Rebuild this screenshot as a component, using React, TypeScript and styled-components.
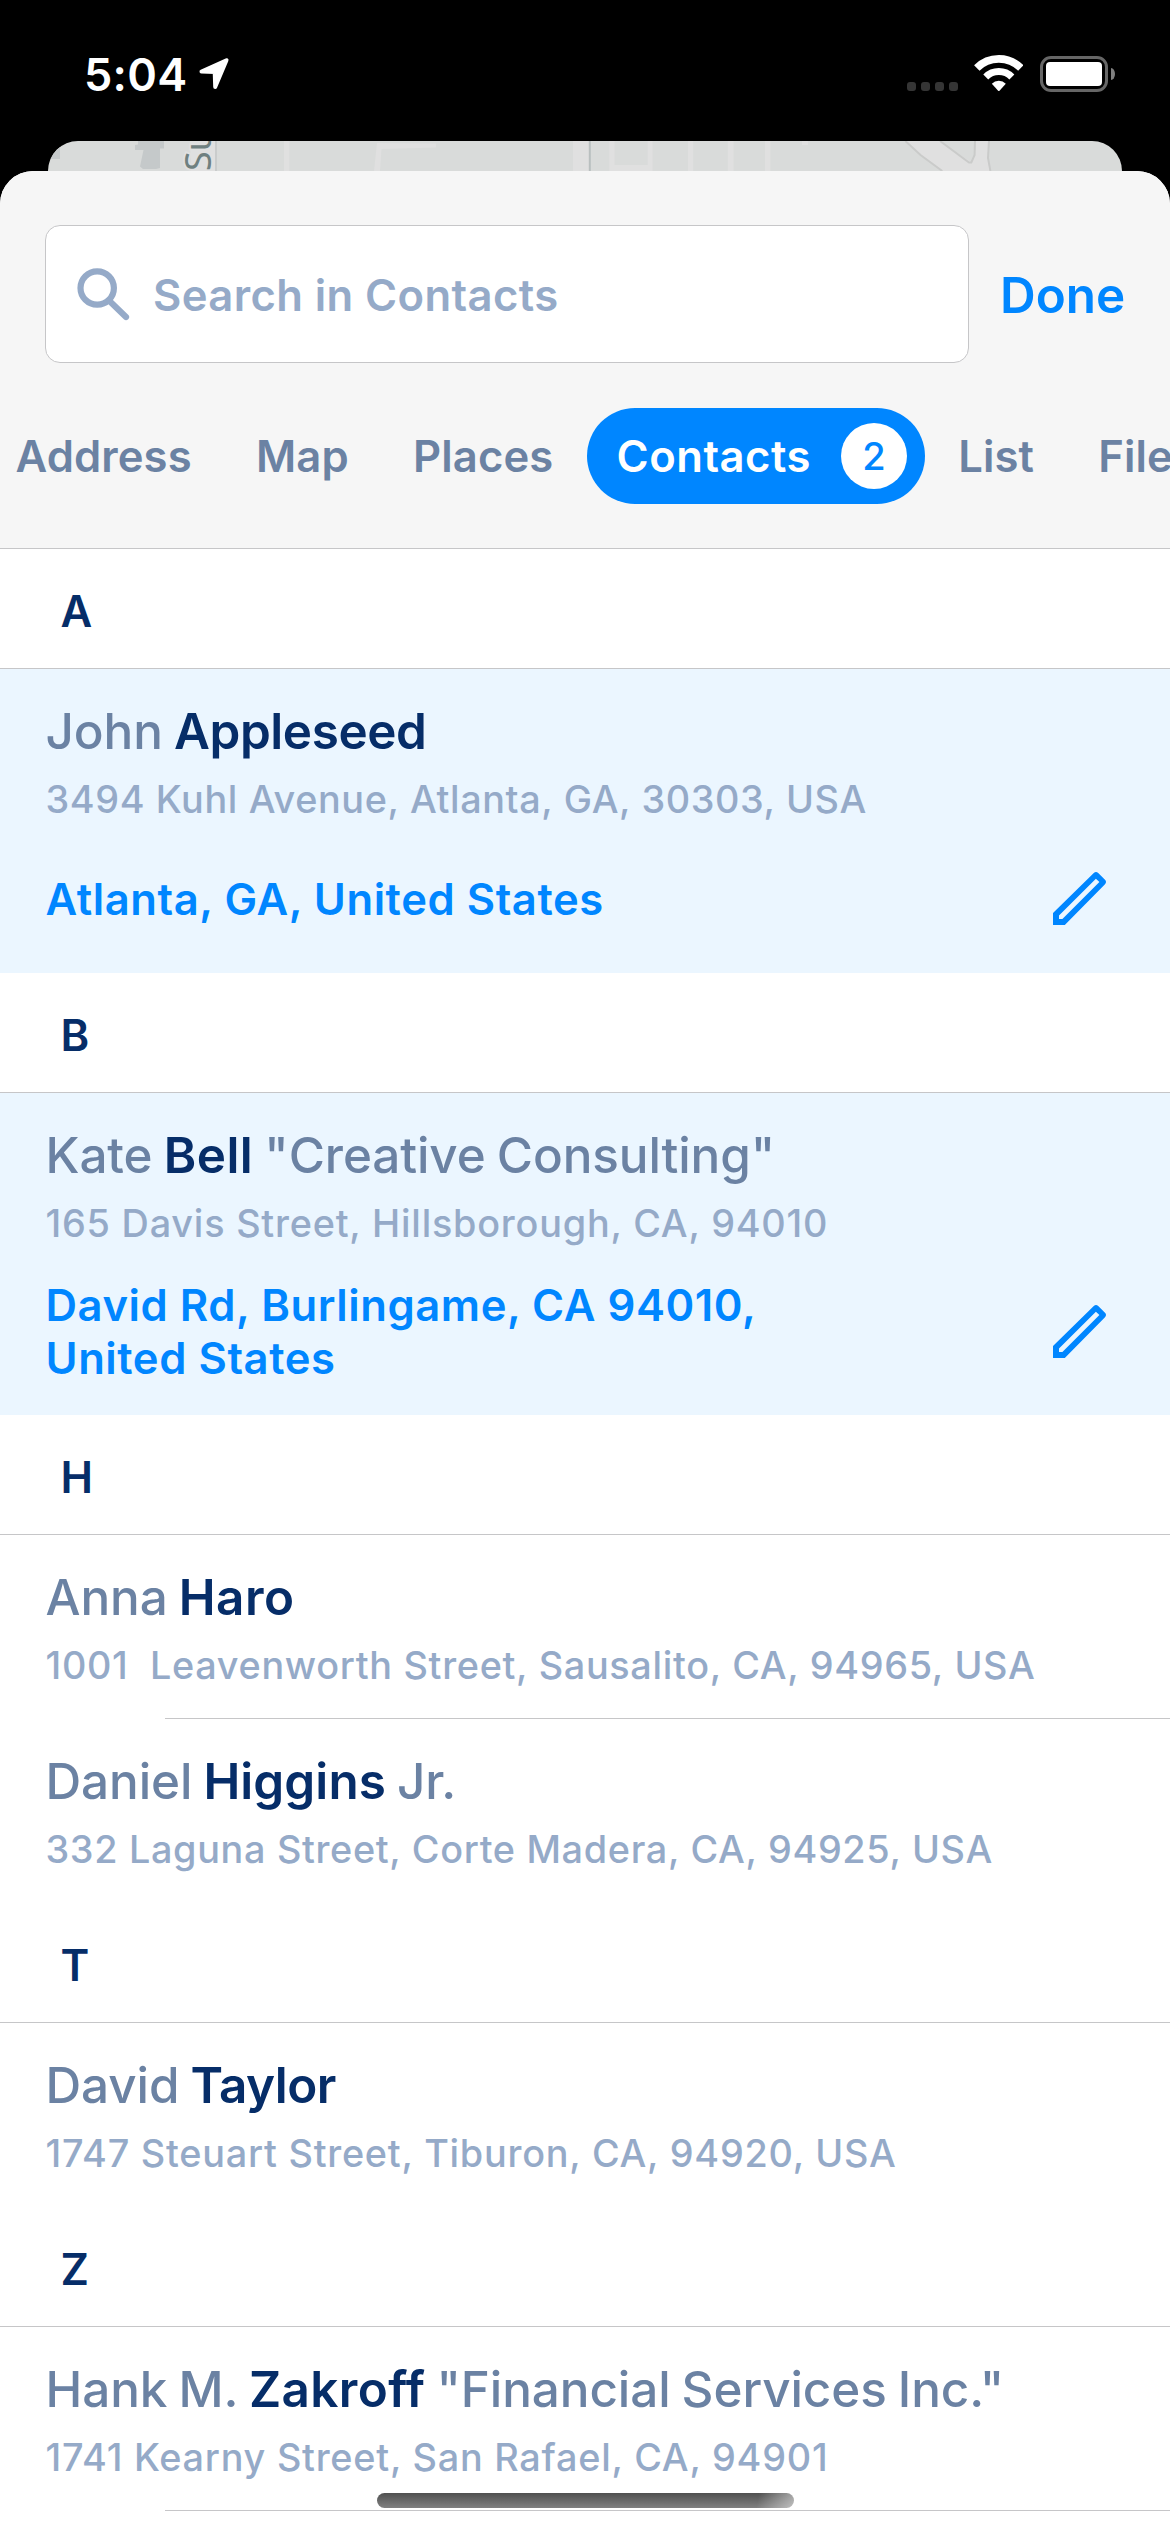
import React from "react";
import styled, { createGlobalStyle } from "styled-components";

const color = {
  blue: "#0086ff",
  navy: "#062d68",
  slate: "#6b82a3",
  mist: "#95aac8",
  line: "#c6c6c8",
  chrome: "#f6f6f6",
  highlight: "#ebf6ff",
};

const GlobalStyle = createGlobalStyle`
  *, *::before, *::after { box-sizing: border-box; }
  body { margin: 0; background: #000; }
  button { border: 0; padding: 0; background: none; font: inherit; color: inherit; }
`;

const Screen = styled.div`
  position: relative;
  display: flex;
  flex-direction: column;
  width: 1170px;
  height: 2532px;
  overflow: hidden;
  background: #000;
  font-family: Inter, "Liberation Sans", sans-serif;
`;

/* ---------- status bar ---------- */

const StatusBar = styled.header`
  display: flex;
  align-items: flex-start;
  justify-content: space-between;
  flex: none;
  height: 141px;
  padding: 55px 55px 0 84px;
`;

const StatusLeft = styled.div`
  display: flex;
  align-items: flex-start;
  gap: 10px;
`;

const Time = styled.span`
  color: #fff;
  font-size: 45px;
  font-weight: 600;
  line-height: 40px;
  letter-spacing: 0.3px;
`;

const LocationIcon = styled.svg`
  display: block;
  width: 32px;
  height: 33px;
  margin-top: 2px;
`;

const StatusRight = styled.div`
  display: flex;
  align-items: flex-start;
`;

const SignalDots = styled.div`
  display: flex;
  gap: 5px;
  margin: 27px 16px 0 0;
`;

const Dot = styled.i`
  width: 9px;
  height: 9px;
  border-radius: 3px;
  background: #353535;
`;

const WifiIcon = styled.svg`
  display: block;
  width: 49.3px;
  height: 36px;
  margin-right: 16.7px;
`;

const Battery = styled.div`
  width: 68px;
  height: 36px;
  margin: 1px 3px 0 0;
  padding: 3px;
  border: 3px solid #666;
  border-radius: 11px;
`;

const BatteryLevel = styled.div`
  height: 100%;
  border-radius: 4px;
  background: #fff;
`;

const BatteryCap = styled.div`
  width: 4px;
  height: 12px;
  margin-top: 13px;
  border-radius: 0 4px 4px 0 / 0 6px 6px 0;
  background: #7f7f7f;
`;

/* ---------- map card behind the sheet ---------- */

const MapCard = styled.div`
  flex: none;
  width: 1074px;
  height: 30px;
  margin: 0 48px;
  overflow: hidden;
  border-radius: 30px 30px 0 0;
  background: #d9dbda;
`;

const MapDrawing = styled.svg`
  display: block;
  width: 1074px;
  height: 30px;
`;

const MapLabel = styled.text`
  font-family: "Noto Sans", sans-serif;
  font-size: 36px;
  fill: #6f8080;
  stroke: #e0e0e0;
  stroke-width: 4px;
  paint-order: stroke;
`;

/* ---------- sheet ---------- */

const Sheet = styled.main`
  display: flex;
  flex-direction: column;
  flex: 1;
  overflow: hidden;
  border-radius: 33px 33px 0 0;
  background: #fff;
`;

const SheetHeader = styled.div`
  flex: none;
  height: 378px;
  padding-top: 54px;
  border-bottom: 1px solid ${color.line};
  background: ${color.chrome};
`;

const SearchRow = styled.div`
  display: flex;
  align-items: center;
  gap: 31px;
  padding-left: 45px;
`;

const SearchField = styled.div`
  display: flex;
  align-items: center;
  gap: 23px;
  width: 924px;
  height: 138px;
  padding-left: 31px;
  border: 1px solid ${color.line};
  border-radius: 15px;
  background: #fff;
`;

const SearchIcon = styled.svg`
  display: block;
  width: 53px;
  height: 53px;
`;

const Placeholder = styled.span`
  padding-top: 4px;
  color: ${color.mist};
  font-size: 43.6px;
  font-weight: 600;
  line-height: 54px;
  letter-spacing: 0.4px;
`;

const DoneButton = styled.button`
  padding-top: 2px;
  color: ${color.blue};
  font-size: 49.4px;
  font-weight: 600;
  line-height: 60px;
  letter-spacing: 0;
`;

const Tabs = styled.nav`
  display: flex;
  gap: 2.3px;
  width: max-content;
  margin: 45px 0 0 -15.5px;
`;

const Tab = styled.button<{ $active?: boolean }>`
  display: flex;
  align-items: center;
  gap: 30px;
  height: 96px;
  padding: ${(p) => (p.$active ? "0 18px 0 30px" : "0 31px")};
  border-radius: 48px;
  background: ${(p) => (p.$active ? color.blue : "transparent")};
  color: ${(p) => (p.$active ? "#fff" : color.slate)};
  font-size: 43.6px;
  font-weight: 600;
  line-height: 54px;
  letter-spacing: ${(p) => (p.$active ? "0.5px" : "0.1px")};
`;

const TabLabel = styled.span`
  padding-top: 2px;
`;

const Badge = styled.span`
  display: flex;
  align-items: center;
  justify-content: center;
  width: 66px;
  height: 66px;
  border-radius: 50%;
  background: #fff;
  color: ${color.blue};
  font-size: 38px;
  font-weight: 500;
  letter-spacing: 0;
`;

/* ---------- contact list ---------- */

const List = styled.div`
  flex: 1;
`;

const SectionHeader = styled.h2`
  display: flex;
  align-items: center;
  height: 120px;
  margin: 0;
  padding: 7px 0 0 60.5px;
  border-bottom: 1px solid ${color.line};
  color: ${color.navy};
  font-size: 43.6px;
  font-weight: 600;
  line-height: 54px;
`;

const Row = styled.article<{ $selected: boolean }>`
  padding-top: 32px;
  min-height: 184px;
  background: ${(p) => (p.$selected ? color.highlight : "#fff")};
`;

const Name = styled.div`
  padding-left: 45.5px;
  color: ${color.slate};
  font-size: 49.4px;
  font-weight: 500;
  line-height: 60px;
  letter-spacing: -0.08px;
  word-spacing: -2px;
  white-space: pre;
`;

const Surname = styled.b<{ $tracking: number }>`
  color: ${color.navy};
  font-weight: 600;
  letter-spacing: ${(p) => p.$tracking}px;
`;

const Address = styled.div<{ $tracking: number }>`
  padding: 14px 0 0 45.5px;
  color: ${color.mist};
  font-size: 37.8px;
  font-weight: 500;
  line-height: 48px;
  letter-spacing: ${(p) => p.$tracking}px;
  white-space: pre;
`;

const MatchRow = styled.div`
  display: flex;
  align-items: center;
  justify-content: space-between;
  min-height: 150px;
  padding: 31px 64px 30.4px 45.5px;
`;

const MatchText = styled.div`
  width: 760px;
  padding-top: 1px;
  margin-bottom: -1px;
  color: ${color.blue};
  font-size: 43.6px;
  font-weight: 600;
  line-height: 53.3px;
  letter-spacing: 0.56px;
`;

const PencilIcon = styled.svg`
  display: block;
  width: 53px;
  height: 53px;
  overflow: visible;
`;

const Divider = styled.div`
  height: 1px;
  margin: 29px 0 0 165px;
  background: ${color.line};
`;

const HomeIndicator = styled.div`
  position: absolute;
  left: 377px;
  top: 2493px;
  width: 417px;
  height: 15px;
  border-radius: 8px;
  background: linear-gradient(100deg, transparent 91%, rgba(255, 255, 255, 0.5) 100%),
    linear-gradient(#505050, #808080);
`;

interface Contact {
  first: string;
  last: string;
  lastTracking: number;
  suffix?: string;
  address: string;
  tracking: number;
  match?: string;
  divider?: boolean;
}

const sections: { letter: string; contacts: Contact[] }[] = [
  {
    letter: "A",
    contacts: [
      {
        first: "John",
        last: "Appleseed",
        lastTracking: -0.4,
        address: "3494 Kuhl Avenue, Atlanta, GA, 30303, USA",
        tracking: 0.62,
        match: "Atlanta, GA, United States",
      },
    ],
  },
  {
    letter: "B",
    contacts: [
      {
        first: "Kate",
        last: "Bell",
        lastTracking: 0.5,
        suffix: '"Creative Consulting"',
        address: "165 Davis Street, Hillsborough, CA, 94010",
        tracking: 0.79,
        match: "David Rd, Burlingame, CA 94010, United States",
      },
    ],
  },
  {
    letter: "H",
    contacts: [
      {
        first: "Anna",
        last: "Haro",
        lastTracking: 0.5,
        address: "1001  Leavenworth Street, Sausalito, CA, 94965, USA",
        tracking: 0.69,
        divider: true,
      },
      {
        first: "Daniel",
        last: "Higgins",
        lastTracking: 0.1,
        suffix: "Jr.",
        address: "332 Laguna Street, Corte Madera, CA, 94925, USA",
        tracking: 0.67,
      },
    ],
  },
  {
    letter: "T",
    contacts: [
      {
        first: "David",
        last: "Taylor",
        lastTracking: -0.5,
        address: "1747 Steuart Street, Tiburon, CA, 94920, USA",
        tracking: 0.76,
      },
    ],
  },
  {
    letter: "Z",
    contacts: [
      {
        first: "Hank M.",
        last: "Zakroff",
        lastTracking: 0.4,
        suffix: '"Financial Services Inc."',
        address: "1741 Kearny Street, San Rafael, CA, 94901",
        tracking: 0.76,
        divider: true,
      },
    ],
  },
];

const tabs: { label: string; count?: number }[] = [
  { label: "Address" },
  { label: "Map" },
  { label: "Places" },
  { label: "Contacts", count: 2 },
  { label: "List" },
  { label: "Files" },
];

function MapStrip() {
  return (
    <MapCard>
      <MapDrawing viewBox="0 0 1074 30">
        <g fill="#c5c9ca">
          <path d="M0 0H12V18H0Z" />
          <path d="M90 0H116V7.5H112V27L108 28H95L92 25.5L95.5 9H87V4L90 3.5Z" />
        </g>
        <g fill="#e0e0e0">
          <path d="M142 0H168V30H143Z" />
          <path d="M236 0H241.3V30H236Z" />
          <path d="M329 2L388 2.5V6.5L333.5 8L332 30H326Z" />
          <path d="M525 0H541V30H525Z" />
          <path d="M561.3 0H566.6V24H599.7V0H604.6V30H561.3Z" />
          <path d="M640 0H645.2V30H640ZM679.8 0H685.5V30H679.8ZM717 0H722.4V30H717ZM754 0H760V4H754Z" />
          <path d="M857.4 0L872.5 14L894.3 30H942.4L940 17L941 0H927L926.6 14L923.3 21.6L892 0Z" />
        </g>
        <path d="M168 0V30" stroke="#cacccc" strokeWidth="2" />
        <path d="M541.8 0V30" stroke="#b9bfbf" strokeWidth="2" />
        <g fill="none" stroke="#cacbca" strokeWidth="2">
          <path d="M857.4 0L872.5 14L894.3 30" />
          <path d="M892 0L921 21.6H923.3L926.6 14L927 0" />
          <path d="M941 0L940 17L942.4 30" />
        </g>
        <MapLabel transform="translate(163 30) rotate(-90)">Su</MapLabel>
      </MapDrawing>
    </MapCard>
  );
}

function Pencil() {
  return (
    <PencilIcon viewBox="0 0 53 53" fill={color.blue}>
      <path
        fillRule="evenodd"
        d="M0 41L40.8 1Q43 -1 45.2 1L52 7.8Q54 10 52 12.2L11.8 53H0ZM6 43.6V47H9.4L46.4 10.1L42.9 6.7Z"
      />
    </PencilIcon>
  );
}

function ContactRow({ contact }: { contact: Contact }) {
  return (
    <Row $selected={Boolean(contact.match)}>
      <Name>
        {contact.first} <Surname $tracking={contact.lastTracking}>{contact.last}</Surname>
        {contact.suffix ? ` ${contact.suffix}` : ""}
      </Name>
      <Address $tracking={contact.tracking}>{contact.address}</Address>
      {contact.match && (
        <MatchRow>
          <MatchText>{contact.match}</MatchText>
          <Pencil />
        </MatchRow>
      )}
      {contact.divider && <Divider />}
    </Row>
  );
}

export default function App() {
  return (
    <Screen>
      <GlobalStyle />
      <StatusBar>
        <StatusLeft>
          <Time>5:04</Time>
          <LocationIcon viewBox="0 0 32 33">
            <path
              d="M28.5 3.2L3.5 14.6L16.7 15L17.2 30Z"
              fill="#fff"
              stroke="#fff"
              strokeWidth="4"
              strokeLinejoin="round"
            />
          </LocationIcon>
        </StatusLeft>
        <StatusRight>
          <SignalDots>
            <Dot />
            <Dot />
            <Dot />
            <Dot />
          </SignalDots>
          <WifiIcon viewBox="0 0 148 108">
            <path d="M8.4 38.9A93.5 93.5 0 0 1 140.6 38.9" fill="none" stroke="#fff" strokeWidth="23" />
            <path d="M35.3 65.8A55.5 55.5 0 0 1 113.7 65.8" fill="none" stroke="#fff" strokeWidth="21" />
            <path d="M53.5 86.5A29 29 0 0 1 95.5 86.5L76.5 107Q74.5 108.5 72.5 107Z" fill="#fff" />
          </WifiIcon>
          <Battery>
            <BatteryLevel />
          </Battery>
          <BatteryCap />
        </StatusRight>
      </StatusBar>
      <MapStrip />
      <Sheet>
        <SheetHeader>
          <SearchRow>
            <SearchField>
              <SearchIcon viewBox="0 0 53 53" fill="none" stroke={color.mist}>
                <circle cx="20.2" cy="20" r="16.7" strokeWidth="6.2" />
                <path d="M32.5 33L49 49" strokeWidth="6.2" strokeLinecap="round" />
              </SearchIcon>
              <Placeholder>Search in Contacts</Placeholder>
            </SearchField>
            <DoneButton>Done</DoneButton>
          </SearchRow>
          <Tabs>
            {tabs.map((tab) => (
              <Tab key={tab.label} $active={tab.count !== undefined}>
                <TabLabel>{tab.label}</TabLabel>
                {tab.count !== undefined && <Badge>{tab.count}</Badge>}
              </Tab>
            ))}
          </Tabs>
        </SheetHeader>
        <List>
          {sections.map((section) => (
            <section key={section.letter}>
              <SectionHeader>{section.letter}</SectionHeader>
              {section.contacts.map((contact) => (
                <ContactRow key={contact.last} contact={contact} />
              ))}
            </section>
          ))}
        </List>
      </Sheet>
      <HomeIndicator />
    </Screen>
  );
}
